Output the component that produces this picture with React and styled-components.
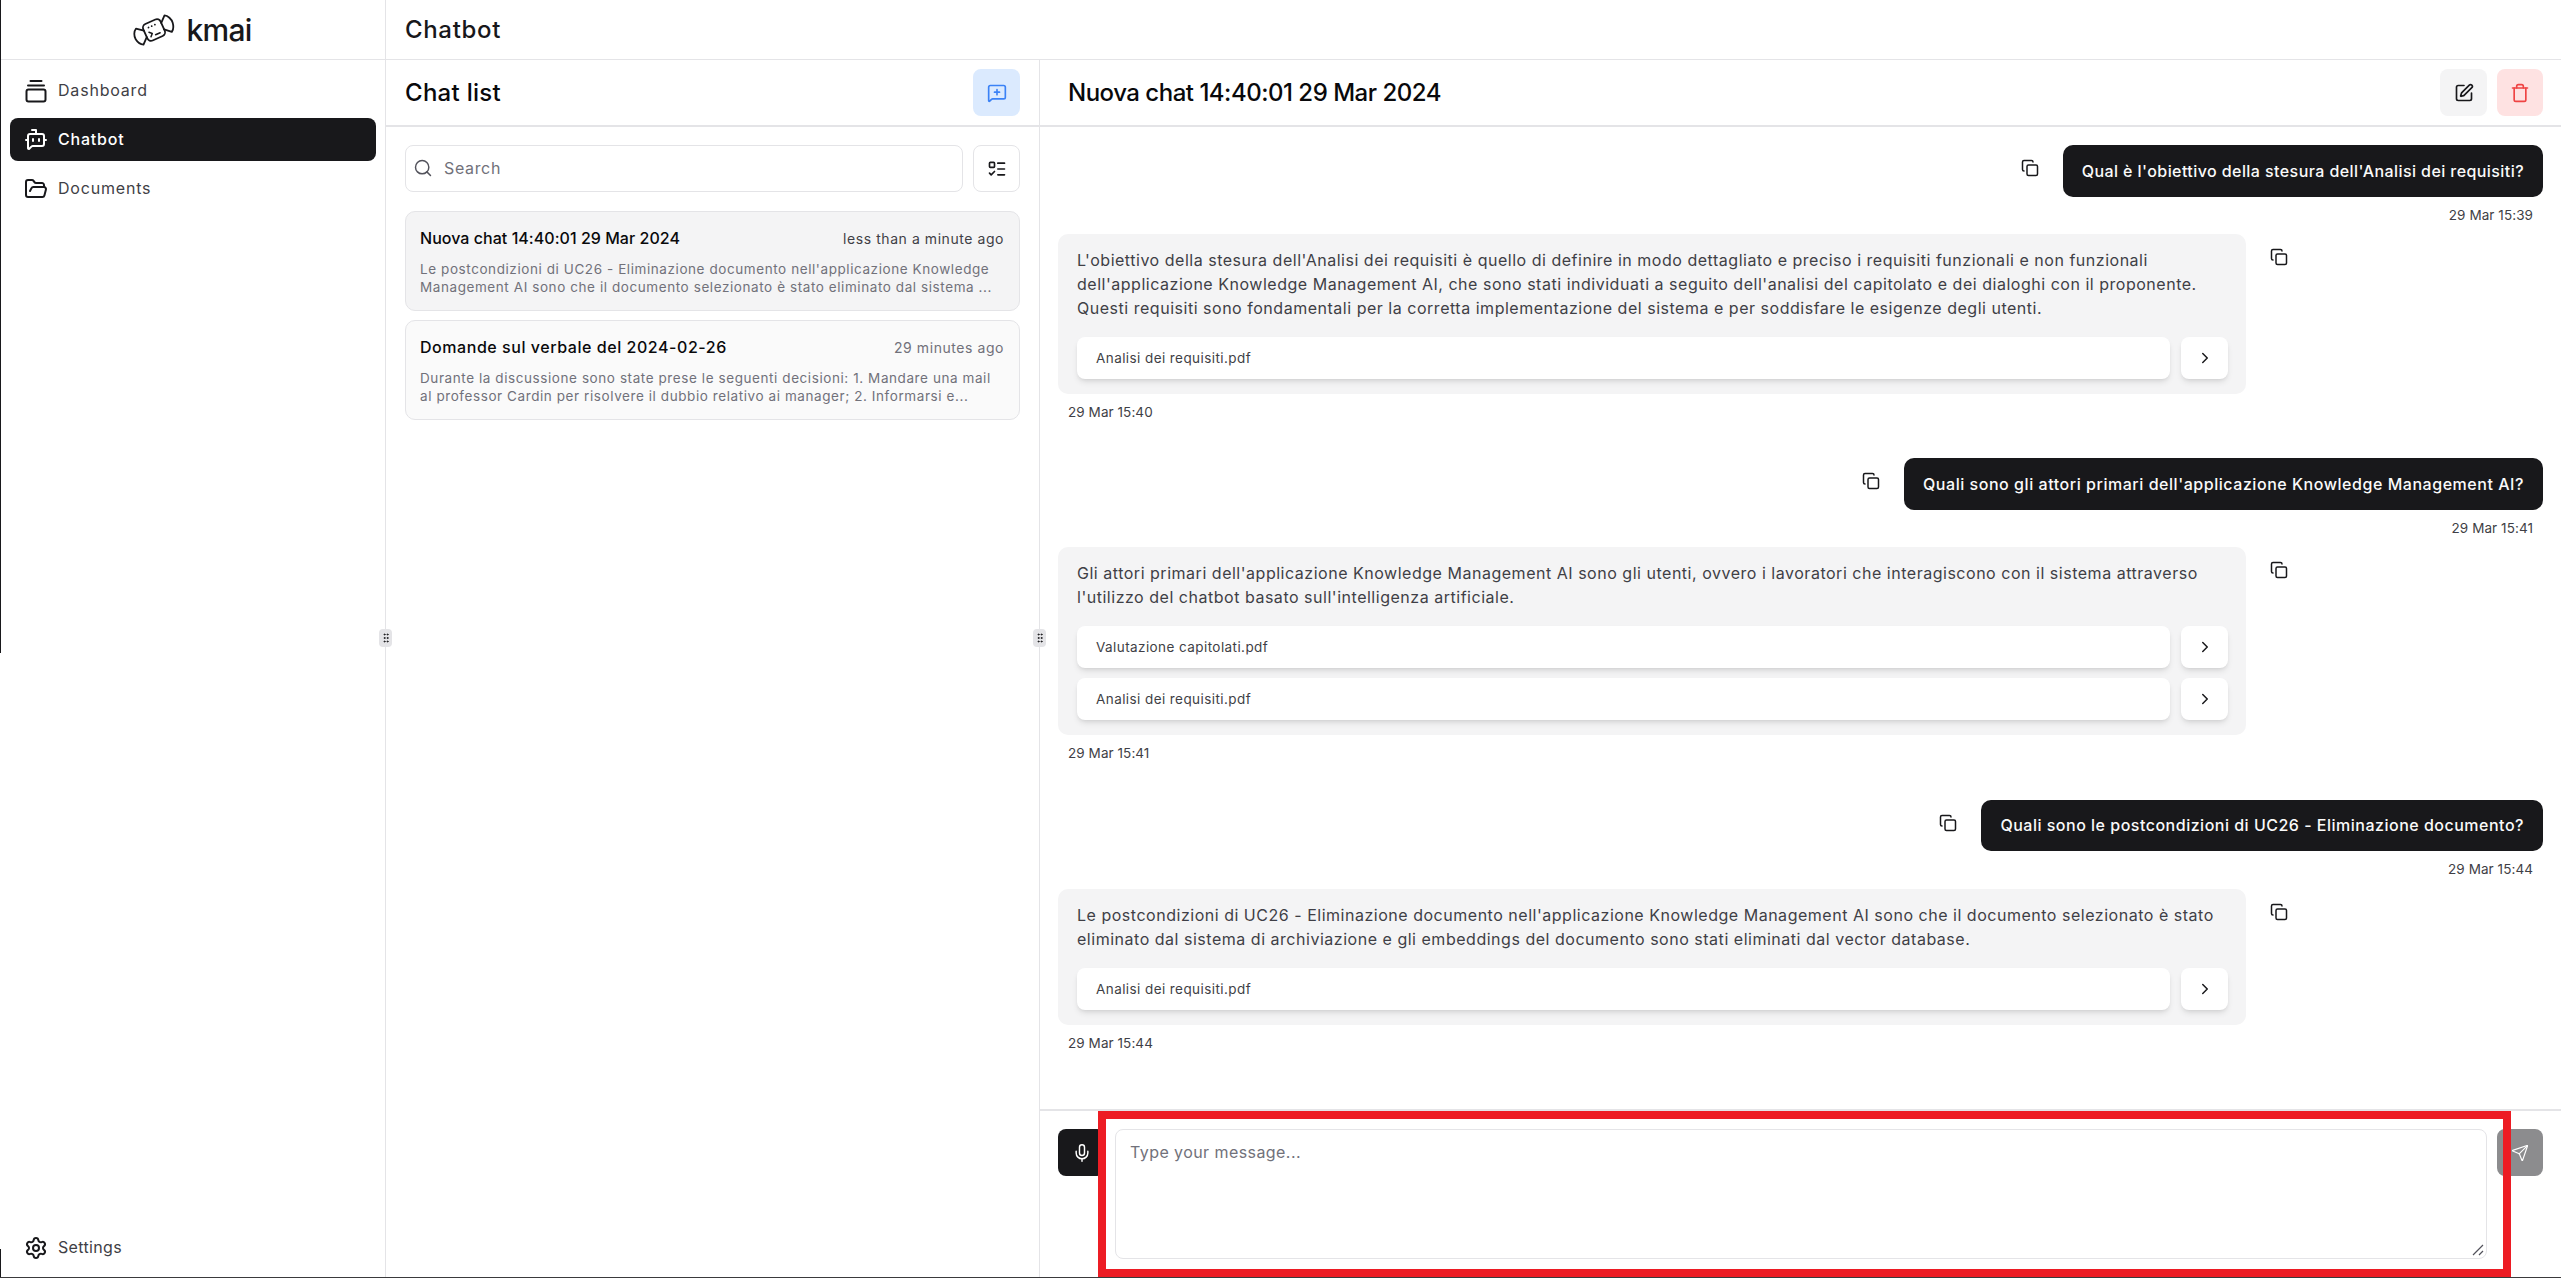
import styled, { createGlobalStyle } from 'styled-components'
import {
  BotMessageSquare,
  ChevronRight,
  Copy,
  FolderOpen,
  GripVertical,
  ListTodo,
  MessageSquarePlus,
  Mic,
  Search,
  Send,
  Settings,
  SquarePen,
  Trash,
} from 'lucide-react'

const GlobalStyle = createGlobalStyle`
  * { box-sizing: border-box; }
  body { margin: 0; background: #fff; font-family: Inter, "Liberation Sans", sans-serif; color: #18181b; }
`

const Page = styled.div`
  position: relative;
  display: grid;
  grid-template-columns: 386px 1fr;
  height: 100vh;
  overflow: hidden;
`

const Sidebar = styled.aside`
  display: flex;
  flex-direction: column;
  min-height: 0;
  border-right: 1px solid #e4e4e7;
`

const LogoCell = styled.div`
  display: flex;
  align-items: center;
  justify-content: center;
  gap: 11px;
  height: 60px;
  flex-shrink: 0;
  border-bottom: 1px solid #e4e4e7;
`

const LogoText = styled.span`
  font-size: 30px;
  font-weight: 500;
  letter-spacing: -0.75px;
`

const Nav = styled.nav`
  display: flex;
  flex-direction: column;
  gap: 6px;
  flex: 1;
  padding: 9px 9px 9px 10px;
`

const NavItem = styled.a`
  display: flex;
  align-items: center;
  gap: 10px;
  height: 43px;
  padding: 0 14px;
  border-radius: 8px;
  font-size: 16px;
  line-height: 22px;
  font-weight: ${(p) => (p.$active ? 500 : 400)};
  letter-spacing: ${(p) => (p.$bottom ? 0.35 : 0.8)}px;
  color: ${(p) => (p.$active ? '#fff' : '#3f3f46')};
  background: ${(p) => (p.$active ? '#18181b' : 'transparent')};
  margin-top: ${(p) => (p.$bottom ? 'auto' : 0)};
  svg { color: ${(p) => (p.$active ? '#fff' : '#18181b')}; flex-shrink: 0; }
  span { margin-top: -2px; }
`

const Main = styled.div`
  display: flex;
  flex-direction: column;
  min-width: 0;
  min-height: 0;
`

const TopBar = styled.header`
  display: flex;
  align-items: center;
  height: 60px;
  flex-shrink: 0;
  padding: 0 19px;
  border-bottom: 1px solid #e4e4e7;
  font-size: 24px;
  font-weight: 500;
  letter-spacing: 0.66px;
`

const Panels = styled.div`
  display: grid;
  grid-template-columns: 654px 1fr;
  flex: 1;
  min-height: 0;
`

const ListPanel = styled.section`
  display: flex;
  flex-direction: column;
  border-right: 1px solid #e4e4e7;
`

const PanelHeader = styled.div`
  display: flex;
  align-items: center;
  justify-content: space-between;
  height: 67px;
  flex-shrink: 0;
  padding: 0 ${(p) => p.$pad}px 0 ${(p) => p.$padLeft}px;
  border-bottom: 2px solid #e4e4e7;
`

const PanelTitle = styled.h2`
  margin: 0;
  font-size: 24px;
  font-weight: 500;
  letter-spacing: ${(p) => p.$tracking}px;
  color: #09090b;
`

const HeaderActions = styled.div`
  display: flex;
  gap: 10px;
`

const SquareButton = styled.button`
  display: flex;
  align-items: center;
  justify-content: center;
  width: ${(p) => p.$width || 47}px;
  height: 47px;
  padding: 0;
  flex-shrink: 0;
  border: ${(p) => (p.$outline ? '1px solid #e4e4e7' : 'none')};
  border-radius: 8px;
  background: ${(p) => p.$bg || '#fff'};
  color: ${(p) => p.$fg || '#18181b'};
`

const ListBody = styled.div`
  display: flex;
  flex-direction: column;
  padding: 18px 19px;
  gap: 9px;
`

const SearchRow = styled.div`
  display: flex;
  gap: 10px;
  margin-bottom: 10px;
`

const SearchBox = styled.label`
  flex: 1;
  display: flex;
  align-items: center;
  gap: 11px;
  height: 47px;
  padding: 0 7px 1px;
  border: 1px solid #e4e4e7;
  border-radius: 8px;
  font-size: 16px;
  letter-spacing: 0.65px;
  color: #71717a;
  svg { color: #52525b; }
`

const ChatCard = styled.article`
  height: 100px;
  padding: 14px 15px 14px 14px;
  border: 1px solid #e4e4e7;
  border-radius: 10px;
  background: ${(p) => (p.$active ? '#f4f4f5' : '#fafafa')};
`

const CardHead = styled.div`
  display: flex;
  justify-content: space-between;
  align-items: center;
  height: 24px;
`

const CardTitle = styled.span`
  font-size: 16px;
  font-weight: 500;
  letter-spacing: ${(p) => p.$tracking}px;
  color: #09090b;
`

const CardTime = styled.span`
  font-size: 14px;
  letter-spacing: 0.56px;
  color: ${(p) => (p.$active ? '#3f3f46' : '#71717a')};
`

const CardPreview = styled.p`
  margin: 10px 0 0;
  font-size: 13.5px;
  line-height: 18px;
  letter-spacing: 0.58px;
  color: #71717a;
  white-space: nowrap;
`

const ChatPanel = styled.section`
  display: flex;
  flex-direction: column;
  min-width: 0;
  min-height: 0;
`

const Messages = styled.div`
  flex: 1;
  min-height: 0;
  overflow: hidden;
  padding: 18px 18px 0;
`

const UserGroup = styled.div`
  display: flex;
  flex-direction: column;
  align-items: flex-end;
  margin-bottom: 9.5px;
`

const BotGroup = styled.div`
  display: flex;
  flex-direction: column;
  align-items: flex-start;
  margin-bottom: 36.25px;
`

const BubbleRow = styled.div`
  display: flex;
  align-items: flex-start;
  gap: 24px;
`

const CopyMark = styled.span`
  display: flex;
  margin-top: 14px;
  color: #18181b;
`

const UserBubble = styled.div`
  display: flex;
  align-items: center;
  height: 51.5px;
  padding: 0 19px;
  border-radius: 10px;
  background: #18181b;
  color: #fafafa;
  font-size: 16px;
  font-weight: 500;
  letter-spacing: ${(p) => p.$tracking}px;
`

const BotBubble = styled.div`
  width: 1188px;
  padding: 14px 18px 15px 19px;
  border-radius: 10px;
  background: #f4f4f5;
`

const BotText = styled.p`
  margin: 0 0 17px;
  font-size: 16px;
  line-height: 24px;
  letter-spacing: 0.52px;
  color: #3f3f46;
  white-space: nowrap;
`

const Sources = styled.div`
  display: flex;
  flex-direction: column;
  gap: 10px;
`

const SourceRow = styled.div`
  display: flex;
  gap: 11px;
`

const SourceName = styled.div`
  flex: 1;
  display: flex;
  align-items: center;
  height: 42px;
  padding: 0 19px;
  border-radius: 8px;
  background: #fff;
  font-size: 13.5px;
  letter-spacing: 0.42px;
  color: #3f3f46;
  box-shadow: 0 4px 6px -1px rgba(0, 0, 0, 0.1), 0 2px 4px -2px rgba(0, 0, 0, 0.1);
`

const SourceOpen = styled.button`
  display: flex;
  align-items: center;
  justify-content: center;
  width: 47px;
  height: 42px;
  padding: 0;
  border: none;
  border-radius: 8px;
  background: #fff;
  color: #18181b;
  box-shadow: 0 4px 6px -1px rgba(0, 0, 0, 0.1), 0 2px 4px -2px rgba(0, 0, 0, 0.1);
`

const Stamp = styled.time`
  display: block;
  height: 20px;
  margin: 8px 10px 0;
  font-size: 13.5px;
  line-height: 20px;
  letter-spacing: 0.07px;
  color: #3f3f46;
`

const Composer = styled.div`
  display: flex;
  align-items: flex-start;
  gap: 10px;
  flex-shrink: 0;
  height: 169px;
  padding: 18px;
  border-top: 2px solid #e4e4e7;
`

const MessageBox = styled.div`
  position: relative;
  flex: 1;
  height: 130px;
  padding: 10px 14px;
  border: 1px solid #e4e4e7;
  border-radius: 8px;
  font-size: 16px;
  line-height: 24px;
  letter-spacing: 0.43px;
  color: #71717a;
`

const ResizeCorner = styled.svg`
  position: absolute;
  right: 2px;
  bottom: 2px;
`

const Handle = styled.div`
  position: absolute;
  top: 629px;
  left: ${(p) => p.$left}px;
  width: 13px;
  height: 18px;
  display: flex;
  align-items: center;
  justify-content: center;
  border-radius: 4px;
  background: #e4e4e7;
  color: #18181b;
  z-index: 2;
`

const RedFrame = styled.div`
  position: absolute;
  left: 1098px;
  top: 1111px;
  width: 1413px;
  height: 166px;
  border: 8px solid #ed1c24;
  z-index: 3;
`

const EdgeLine = styled.div`
  position: absolute;
  left: 0;
  top: ${(p) => p.$top}px;
  width: 1px;
  height: ${(p) => p.$height}px;
  background: #18181b;
  z-index: 4;
`

const BottomLine = styled.div`
  position: absolute;
  left: 0;
  right: 0;
  bottom: 0;
  height: 1px;
  background: #3a3a3c;
  z-index: 4;
`

const CandyLogo = () => (
  <svg width="42" height="34" viewBox="0 0 42 34" fill="none" stroke="#18181b" strokeWidth="1.8" strokeLinecap="round" strokeLinejoin="round">
    <g transform="rotate(-24 21 17)">
      <rect x="11.5" y="8" width="19" height="18" rx="4" />
      <path d="M11.5 13.5 L5 8.5 C2 10 0 14.5 0.5 18 C1 21.5 2.5 24.5 5.5 26 L11.5 20.5" />
      <path d="M30.5 13.5 L36.5 8 C39.5 9.5 41.5 14 41 18 C40.5 21.5 39 24.5 36.5 26 L30.5 20.5" />
      <path d="M17 12.5h.01 M20.5 12.5h.01 M24 12.5h.01" />
      <path d="M15.5 17l2.5 2.5-2.5 2.5 M20.5 22h5" strokeWidth="1.5" />
    </g>
  </svg>
)

const DashboardIcon = () => (
  <svg width="24" height="24" viewBox="0 0 24 24" fill="none" stroke="currentColor" strokeWidth="2" strokeLinecap="round" strokeLinejoin="round">
    <rect x="2.5" y="10.5" width="19" height="12" rx="2" />
    <path d="M4 6.5h16 M6.5 2h11" />
  </svg>
)

const conversation = [
  {
    question: "Qual è l'obiettivo della stesura dell'Analisi dei requisiti?",
    tracking: 0.425,
    askedAt: '29 Mar 15:39',
    answer: [
      "L'obiettivo della stesura dell'Analisi dei requisiti è quello di definire in modo dettagliato e preciso i requisiti funzionali e non funzionali",
      "dell'applicazione Knowledge Management AI, che sono stati individuati a seguito dell'analisi del capitolato e dei dialoghi con il proponente.",
      'Questi requisiti sono fondamentali per la corretta implementazione del sistema e per soddisfare le esigenze degli utenti.',
    ],
    sources: ['Analisi dei requisiti.pdf'],
    answeredAt: '29 Mar 15:40',
  },
  {
    question: "Quali sono gli attori primari dell'applicazione Knowledge Management AI?",
    tracking: 0.54,
    askedAt: '29 Mar 15:41',
    answer: [
      "Gli attori primari dell'applicazione Knowledge Management AI sono gli utenti, ovvero i lavoratori che interagiscono con il sistema attraverso",
      "l'utilizzo del chatbot basato sull'intelligenza artificiale.",
    ],
    sources: ['Valutazione capitolati.pdf', 'Analisi dei requisiti.pdf'],
    answeredAt: '29 Mar 15:41',
  },
  {
    question: 'Quali sono le postcondizioni di UC26 - Eliminazione documento?',
    tracking: 0.5,
    askedAt: '29 Mar 15:44',
    answer: [
      "Le postcondizioni di UC26 - Eliminazione documento nell'applicazione Knowledge Management AI sono che il documento selezionato è stato",
      'eliminato dal sistema di archiviazione e gli embeddings del documento sono stati eliminati dal vector database.',
    ],
    sources: ['Analisi dei requisiti.pdf'],
    answeredAt: '29 Mar 15:44',
  },
]

const chats = [
  {
    title: 'Nuova chat 14:40:01 29 Mar 2024',
    tracking: 0.04,
    time: 'less than a minute ago',
    lines: [
      "Le postcondizioni di UC26 - Eliminazione documento nell'applicazione Knowledge",
      'Management AI sono che il documento selezionato è stato eliminato dal sistema ...',
    ],
    active: true,
  },
  {
    title: 'Domande sul verbale del 2024-02-26',
    tracking: 0.55,
    time: '29 minutes ago',
    lines: [
      'Durante la discussione sono state prese le seguenti decisioni: 1. Mandare una mail',
      'al professor Cardin per risolvere il dubbio relativo ai manager; 2. Informarsi e...',
    ],
  },
]

const App = () => (
  <Page>
    <GlobalStyle />
    <Sidebar>
      <LogoCell>
        <CandyLogo />
        <LogoText>kmai</LogoText>
      </LogoCell>
      <Nav>
        <NavItem><DashboardIcon /><span>Dashboard</span></NavItem>
        <NavItem $active><BotMessageSquare size={24} strokeWidth={2} /><span>Chatbot</span></NavItem>
        <NavItem><FolderOpen size={24} strokeWidth={2} /><span>Documents</span></NavItem>
        <NavItem $bottom><Settings size={24} strokeWidth={2} /><span>Settings</span></NavItem>
      </Nav>
    </Sidebar>
    <Main>
      <TopBar>Chatbot</TopBar>
      <Panels>
        <ListPanel>
          <PanelHeader $pad={19} $padLeft={19}>
            <PanelTitle $tracking={0.29}>Chat list</PanelTitle>
            <SquareButton $bg="#dbeafe" $fg="#3b82f6"><MessageSquarePlus size={20} /></SquareButton>
          </PanelHeader>
          <ListBody>
            <SearchRow>
              <SearchBox><Search size={20} strokeWidth={1.75} />Search</SearchBox>
              <SquareButton $outline><ListTodo size={20} /></SquareButton>
            </SearchRow>
            {chats.map((chat) => (
              <ChatCard key={chat.title} $active={chat.active}>
                <CardHead>
                  <CardTitle $tracking={chat.tracking}>{chat.title}</CardTitle>
                  <CardTime $active={chat.active}>{chat.time}</CardTime>
                </CardHead>
                <CardPreview>{chat.lines[0]}<br />{chat.lines[1]}</CardPreview>
              </ChatCard>
            ))}
          </ListBody>
        </ListPanel>
        <ChatPanel>
          <PanelHeader $pad={18} $padLeft={28}>
            <PanelTitle $tracking={-0.49}>Nuova chat 14:40:01 29 Mar 2024</PanelTitle>
            <HeaderActions>
              <SquareButton $bg="#f4f4f5"><SquarePen size={20} /></SquareButton>
              <SquareButton $width={46} $bg="#fee2e2" $fg="#ef4444"><Trash size={20} /></SquareButton>
            </HeaderActions>
          </PanelHeader>
          <Messages>
            {conversation.map((turn) => (
              <div key={turn.question}>
                <UserGroup>
                  <BubbleRow>
                    <CopyMark><Copy size={18} /></CopyMark>
                    <UserBubble $tracking={turn.tracking}>{turn.question}</UserBubble>
                  </BubbleRow>
                  <Stamp>{turn.askedAt}</Stamp>
                </UserGroup>
                <BotGroup>
                  <BubbleRow>
                    <BotBubble>
                      <BotText>
                        {turn.answer.map((line) => (
                          <span key={line}>{line}<br /></span>
                        ))}
                      </BotText>
                      <Sources>
                        {turn.sources.map((source) => (
                          <SourceRow key={source}>
                            <SourceName>{source}</SourceName>
                            <SourceOpen><ChevronRight size={18} /></SourceOpen>
                          </SourceRow>
                        ))}
                      </Sources>
                    </BotBubble>
                    <CopyMark><Copy size={18} /></CopyMark>
                  </BubbleRow>
                  <Stamp>{turn.answeredAt}</Stamp>
                </BotGroup>
              </div>
            ))}
          </Messages>
          <Composer>
            <SquareButton $bg="#18181b" $fg="#fff"><Mic size={20} strokeWidth={1.75} /></SquareButton>
            <MessageBox>
              Type your message...
              <ResizeCorner width="12" height="12" viewBox="0 0 12 12" stroke="#52525b" strokeWidth="1.2">
                <path d="M1 11 L11 1 M7 11 L11 7" />
              </ResizeCorner>
            </MessageBox>
            <SquareButton $width={46} $bg="#8c8c8e" $fg="#fff"><Send size={18} strokeWidth={1.5} /></SquareButton>
          </Composer>
        </ChatPanel>
      </Panels>
    </Main>
    <Handle $left={379}><GripVertical size={12} /></Handle>
    <Handle $left={1033}><GripVertical size={12} /></Handle>
    <RedFrame />
    <EdgeLine $top={0} $height={653} />
    <EdgeLine $top={1249} $height={29} />
    <BottomLine />
  </Page>
)

export default App
